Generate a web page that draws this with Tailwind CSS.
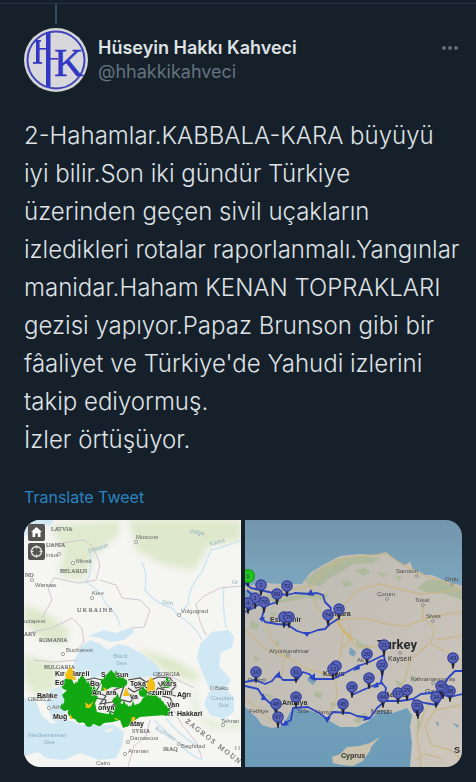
<!DOCTYPE html>
<html lang="tr">
<head>
    <meta charset="UTF-8">
    <meta name="viewport" content="width=device-width, initial-scale=1.0">
    <title>Hüseyin Hakkı Kahveci</title>
    <script src="https://cdn.jsdelivr.net/npm/@tailwindcss/browser@4"></script>
</head>
<body class="bg-[#16202b] min-h-screen pt-[3px] font-['Inter','Liberation_Sans',sans-serif]">

    <article class="border-t border-[#2c3843] pl-6 pr-[14px] pb-4">

        <!-- Thread line -->
        <div class="w-16 h-5 mb-1 flex justify-center">
            <div class="w-[2px] h-full bg-[#34495a]"></div>
        </div>

        <!-- Author -->
        <header class="flex items-start">
            <svg class="size-16 shrink-0" viewBox="0 0 64 64" role="img" aria-label="HK">
                <circle cx="32" cy="32" r="32" fill="#d5d5d8"/>
                <circle cx="32" cy="32" r="28.5" fill="#d8d8dc" stroke="#4044b8" stroke-width="2"/>
                <g fill="#3338c4">
                    <rect x="22" y="4" width="4.5" height="55"/>
                    <rect x="12" y="12" width="3.6" height="23"/>
                    <rect x="9" y="34" width="9" height="1.8"/>
                    <rect x="11" y="12" width="6" height="1.6"/>
                    <rect x="15" y="20" width="8" height="1.6"/>
                    <rect x="26" y="30" width="8" height="1.6"/>
                    <text x="30" y="48" font-family="Liberation Serif, serif" font-size="41" stroke="#3338c4" stroke-width="0.5">K</text>
                </g>
            </svg>
            <div class="ml-[10px] mt-2 flex-1 min-w-0">
                <h1 class="text-[18px] leading-6 font-semibold text-[#dfe2e4]">Hüseyin Hakkı Kahveci</h1>
                <p class="text-[18px] leading-6 text-[#64727e]">@hhakkikahveci</p>
            </div>
            <button type="button" aria-label="More" class="mt-3 w-6 h-4 flex items-center justify-center">
                <svg class="w-[18px] h-1" viewBox="0 0 18 4" fill="#64727e">
                    <circle cx="3" cy="2" r="1.9"/>
                    <circle cx="9" cy="2" r="1.9"/>
                    <circle cx="15" cy="2" r="1.9"/>
                </svg>
            </button>
        </header>

        <!-- Tweet text -->
        <p class="mt-[25px] text-[24px] leading-[38px] font-light text-[#dfe2e5] whitespace-nowrap">
            2-Hahamlar.KABBALA-KARA büyüyü<br>
            iyi bilir.Son iki gündür Türkiye<br>
            üzerinden geçen sivil uçakların<br>
            izledikleri rotalar raporlanmalı.Yangınlar<br>
            manidar.Haham KENAN TOPRAKLARI<br>
            gezisi yapıyor.Papaz Brunson gibi bir<br>
            fâaliyet ve Türkiye'de Yahudi izlerini<br>
            takip ediyormuş.<br>
            İzler örtüşüyor.
        </p>
        <a href="#" class="mt-[26px] block w-fit text-[16px] leading-6 text-[#2a83c0]">Translate Tweet</a>

        <!-- Attached maps -->
        <div class="mt-[11px] grid grid-cols-2 gap-1 rounded-2xl overflow-hidden">

            <svg class="w-full h-auto block" viewBox="0 0 217 247" role="img" aria-label="Map of fires">
                <defs>
                    <path id="flame" d="M0 5 C-5 4 -5 0 -3 -3 L-2 -1 L0 -7 L2 -2 L3 -3 C5 0 5 4 0 5Z"/>
                    <filter id="soft" x="-20%" y="-20%" width="140%" height="140%"><feGaussianBlur stdDeviation="3"/></filter>
                </defs>
                <rect width="217" height="247" fill="#f5f5f2"/>
                <!-- forests and hills -->
                <g fill="#dbe7c6" filter="url(#soft)">
                    <path d="M25 5 L95 0 L95 15 L70 35 L60 60 L35 55 L40 30Z" opacity=".8"/>
                    <path d="M105 0 L217 0 L217 20 L185 25 L170 50 L140 45 L112 30Z" opacity=".9"/>
                    <path d="M0 85 L20 92 L45 110 L40 125 L15 118 L0 100Z" opacity=".9"/>
                    <path d="M0 135 L35 145 L30 170 L10 175 L0 160Z" opacity=".8"/>
                    <path d="M112 128 L150 140 L175 155 L172 162 L140 150Z"/>
                    <path d="M170 165 L176 195 L200 205 L217 200 L217 210 L185 208 L168 190Z" opacity=".6"/>
                </g>
                <!-- seas -->
                <g fill="#cfe8f4">
                    <path d="M0 0 L30 0 L26 6 L14 4 L8 12 L0 16Z"/>
                    <path d="M52 152 L50 142 L56 128 L66 120 L76 124 L84 130 L94 124 L104 126 L118 134 L134 146 L138 156 L110 160 L90 152 L70 158Z"/>
                    <path d="M64 116 L80 110 L92 113 L108 107 L110 112 L100 120 L86 122 L76 118Z"/>
                    <path d="M173 138 L176 124 L188 112 L204 110 L210 116 L208 128 L197 132 L195 146 L207 160 L202 168 L210 178 L210 192 L200 199 L186 195 L180 184 L186 170 L178 152Z"/>
                    <path d="M0 178 L12 182 L18 196 L28 204 L44 200 L58 205 L90 205 L100 212 L98 226 L92 238 L76 240 L56 233 L40 240 L22 238 L14 232 L0 236Z"/>
                    <path d="M26 170 L38 166 L42 190 L38 204 L28 200 L22 182Z"/>
                </g>
                <path d="M80 210 L90 207 L88 211 L83 213Z" fill="#f1f0e8"/>
                <!-- rivers -->
                <g fill="none" stroke="#cbe4f0" stroke-width="1.3">
                    <path d="M65 30 Q70 50 62 62 Q76 70 82 84 Q95 95 96 106"/>
                    <path d="M117 42 Q124 50 121 70 Q132 84 148 88 L154 95"/>
                    <path d="M217 20 Q200 27 187 30 L178 52 Q165 65 164 84 L155 96 Q170 104 178 120"/>
                    <path d="M200 66 Q198 85 202 108"/>
                    <path d="M130 200 Q145 215 154 222 Q165 235 178 240"/>
                    <path d="M142 198 Q155 215 172 225"/>
                </g>
                <!-- borders -->
                <g fill="none" stroke="#d3c4d0" stroke-width="1">
                    <path d="M26 25 L45 22 L60 20 L70 28 L76 45 L72 60 L55 63 L30 58 L24 68 L28 80 L18 98"/>
                    <path d="M76 60 L92 65 L98 78 L116 80 L126 90 L120 107 L108 108"/>
                    <path d="M8 112 L28 108 L48 98 L58 108 L60 122 L52 132"/>
                    <path d="M217 66 L196 68 L180 76 L172 84 L176 102 L182 115"/>
                    <path d="M10 140 L30 142 L54 140"/>
                    <path d="M126 200 L122 216 L110 226 L104 247"/>
                    <path d="M150 190 L158 205 L172 222 L178 238"/>
                    <path d="M132 155 L150 158 L170 168"/>
                </g>
                <!-- place names -->
                <g font-family="Liberation Serif, serif" font-size="6" fill="#6f6f6f" stroke="#6f6f6f" stroke-width=".2">
                    <text x="27" y="11">LATVIA</text>
                    <text x="22" y="27">UANIA</text>
                    <text x="36" y="53">BELARUS</text>
                    <text x="1" y="57">ND</text>
                    <text x="53" y="92">U K R A I N E</text>
                    <text x="0" y="116">ARY</text>
                    <text x="15" y="122">ROMANIA</text>
                    <text x="20" y="149">BULGARIA</text>
                    <text x="4" y="181">GREECE</text>
                    <text x="129" y="156">GEORGIA</text>
                    <text x="108" y="213">SYRIA</text>
                    <text x="139" y="231">IRAQ</text>
                    <text x="161" y="202" transform="rotate(38 161 202)" font-size="7">Z A G R O S &#160; M O U N</text>
                </g>
                <g font-family="Liberation Sans, sans-serif" font-size="6" fill="#686868">
                    <text x="22" y="37">lnius</text>
                    <text x="52" y="43">Minsk</text>
                    <text x="11" y="67">Warsaw</text>
                    <text x="68" y="75">Kiev</text>
                    <text x="0" y="103">udapest</text>
                    <text x="42" y="132">Bucharest</text>
                    <text x="112" y="19">Moscow</text>
                    <text x="157" y="93">Volgograd</text>
                    <text x="28" y="189">Ath</text>
                    <text x="72" y="245">Cairo</text>
                    <text x="106" y="220">Damascus</text>
                    <text x="104" y="233">Amman</text>
                    <text x="157" y="228">Baghdad</text>
                    <text x="191" y="170">Baku</text>
                    <text x="197" y="203">Tehran</text>
                    <text x="211" y="230">I I</text>
                </g>
                <g font-family="Liberation Sans, sans-serif" font-size="6" fill="#8fb0bf">
                    <text x="89" y="138">Black</text>
                    <text x="92" y="145">Sea</text>
                    <text x="187" y="180">Caspian</text>
                    <text x="194" y="187">Sea</text>
                    <text x="4" y="217">Mediterranean</text>
                    <text x="20" y="224">Sea</text>
                    <text x="65" y="33" transform="rotate(-18 65 33)">Dnieper</text>
                    <text x="138" y="84" transform="rotate(8 138 84)">Don</text>
                    <text x="165" y="13" transform="rotate(8 165 13)">Volga</text>
                    <text x="186" y="26" transform="rotate(-15 186 26)">Kama</text>
                    <text x="208" y="64">Ur</text>
                    <text x="131" y="209" transform="rotate(32 131 209)" font-size="5">Euphrates</text>
                </g>
                <g fill="#fff" stroke="#888" stroke-width=".8">
                    <circle cx="35" cy="34" r="1.6"/><circle cx="49" cy="43" r="1.6"/>
                    <circle cx="8" cy="60" r="1.6"/><circle cx="68" cy="78" r="1.6"/>
                    <circle cx="112" cy="22" r="1.6"/><circle cx="155" cy="95" r="1.6"/>
                    <circle cx="39" cy="134" r="1.6"/><circle cx="25" cy="188" r="1.6"/>
                    <circle cx="188" cy="168" r="1.6"/><circle cx="199" cy="205" r="1.6"/>
                    <circle cx="155" cy="224" r="1.6"/><circle cx="101" cy="234" r="1.6"/>
                    <circle cx="104" cy="222" r="1.6"/>
                </g>
                <!-- province outlines -->
                <path d="M66 158 L78 162 L104 158 L134 156 L148 158 L154 168 L150 180 L154 190 L120 192 L92 196 L74 190Z" fill="#eeeeec"/>
                <g fill="none" stroke="#4a4a4a" stroke-width="1.2">
                    <path d="M66 160 L76 164 L72 172 L82 176 L76 184 L88 182 L94 176 L90 170 L100 166 L96 178 L84 190 L92 194"/>
                    <path d="M104 160 L116 158 L122 162 L134 157 L146 158 L152 166 L146 172 L134 168 L128 176 L118 168 L110 172 L104 168"/>
                    <path d="M138 176 L146 178 L150 186 L142 190 M118 190 L126 188 L128 194"/>
                    <path d="M62 160 L70 158 L78 160 M72 178 L82 180 L80 188 L90 186 L98 180 L106 182 L112 176 L104 174"/>
                    <path d="M108 162 L112 168 L120 166 L126 170 M134 162 L138 168 L148 166 M132 172 L142 174 L152 176"/>
                </g>
                <!-- fires -->
                <g fill="#12a812">
                    <path d="M46 155 L50 164 L54 162 L58 154 L63 163 L68 165 L67 170 L74 177 L71 183 L73 192 L89 195 L91 186 L96 183 L106 187 L116 183 L120 177 L129 172 L138 181 L145 190 L143 195 L128 196 L116 197 L108 202 L104 206 L99 208 L96 200 L89 202 L80 203 L76 206 L66 203 L60 203 L48 198 L45 190 L39 188 L41 181 L38 175 L43 170 L40 160Z"/>
                    <path d="M78 165 L82 155 L87 150 L91 154 L95 152 L98 158 L103 162 L98 168 L88 167 L82 170 L77 171Z"/>
                    <use href="#flame" x="58" y="161"/><use href="#flame" x="42" y="165"/>
                    <use href="#flame" x="41" y="186"/><use href="#flame" x="70" y="172"/>
                    <use href="#flame" x="93" y="180"/><use href="#flame" x="119" y="172"/>
                    <use href="#flame" x="143" y="163"/><use href="#flame" x="86" y="197"/>
                    <use href="#flame" x="102" y="202"/><use href="#flame" x="129" y="178"/>
                    <use href="#flame" x="75" y="201"/><use href="#flame" x="56" y="198"/>
                    <use href="#flame" x="48" y="192"/><use href="#flame" x="65" y="202"/>
                    <use href="#flame" x="81" y="161"/><use href="#flame" x="92" y="157"/>
                    <use href="#flame" x="99" y="162"/><use href="#flame" x="136" y="184"/>
                    <use href="#flame" x="122" y="181"/><use href="#flame" x="109" y="188"/>
                    <use href="#flame" x="100" y="187"/><use href="#flame" x="142" y="191"/>
                    <use href="#flame" x="52" y="168"/><use href="#flame" x="64" y="167"/>
                </g>
                <g fill="#f2bf12">
                    <path d="M46 147 L50 151 L52 160 L42 159 L41 154Z"/>
                    <path d="M127 157 L131 163 L131 172 L123 172 L123 163Z"/>
                    <path d="M99 176 L102 167 L104 172 L106 176Z"/>
                    <path d="M61 182 L65 185 L70 181 L66 188 L62 188Z"/>
                    <path d="M79 167 L84 170 L80 171Z"/>
                    <path d="M46 194 L49 199 L46 199Z"/>
                    <path d="M108 197 L111 197 L111 202 L107 201Z"/>
                    <path d="M90 198 L95 199 L92 200Z"/>
                </g>
                <g font-family="Liberation Sans, sans-serif" font-weight="700" font-size="7" fill="#1c1c1c" stroke="#f4f4f0" stroke-width="1" paint-order="stroke">
                    <text x="31" y="156">Kır</text><text x="49" y="156">lareli</text>
                    <text x="31" y="165">Ed</text><text x="13" y="178">Balıke</text>
                    <text x="29" y="199">Muğ</text>
                    <text x="77" y="157">S</text><text x="92" y="157">sun</text>
                    <text x="66" y="166">Bo</text><text x="68" y="175">An</text><text x="82" y="175">ara</text>
                    <text x="74" y="190">onya</text>
                    <text x="106" y="166">Toka</text><text x="137" y="166">Kars</text>
                    <text x="106" y="179">va</text>
                    <text x="125" y="175">rzurum</text><text x="153" y="177">Ağrı</text>
                    <text x="143" y="187">Van</text>
                    <text x="144" y="196">rt</text><text x="153" y="196">Hakkari</text>
                    <text x="106" y="206">atay</text>
                </g>
                <!-- map controls -->
                <rect x="4" y="4" width="17" height="17" rx="2" fill="#555553"/>
                <path d="M12.5 7 L18 12 L16.5 12 L16.5 17 L13.8 17 L13.8 13.5 L11.2 13.5 L11.2 17 L8.5 17 L8.5 12 L7 12Z" fill="#fff"/>
                <rect x="4" y="23" width="17" height="17" rx="2" fill="#555553"/>
                <circle cx="12.5" cy="31.5" r="5" fill="none" stroke="#e8e8e8" stroke-width="1.3"/>
                <path d="M12.5 25.5v3 M12.5 34.5v3 M6.5 31.5h3 M15.5 31.5h3" stroke="#e8e8e8" stroke-width="1.2"/>
            </svg>

            <svg class="w-full h-auto block" viewBox="0 0 217 247" role="img" aria-label="Map of the route">
                <defs>
                    <linearGradient id="sea" x1="0" y1="0" x2="0" y2="1">
                        <stop offset="0" stop-color="#7396ab"/>
                        <stop offset=".25" stop-color="#7ca5bd"/>
                        <stop offset="1" stop-color="#6d9cb8"/>
                    </linearGradient>
                    <linearGradient id="land" x1="0" y1="0" x2="1" y2="1">
                        <stop offset="0" stop-color="#bdbbb4"/>
                        <stop offset="1" stop-color="#cdc6bc"/>
                    </linearGradient>
                </defs>
                <rect width="217" height="247" fill="url(#sea)"/>
                <path fill="url(#land)" d="M0 66 L20 63 L38 64 L57 64 L65 53 L78 45 L95 36 L115 34 L130 35 L141 32 L150 40 L160 45 L165 42 L168 49 L175 52 L180 55 L187 55 L200 61 L217 66 L217 247 L165 247 L167 223 L165 207 L167 195 L162 188 L148 193 L135 190 L125 200 L112 207 L95 207 L83 200 L67 191 L50 188 L45 192 L38 206 L27 208 L17 205 L12 198 L0 187Z"/>
                <path fill="#c9c2ae" d="M87 237 L95 234 L102 227 L114 226 L125 223 L135 217 L126 227 L125 231 L118 241 L108 246 L96 245 L88 243Z"/>
                <path fill="#7ba2b5" d="M0 70 L8 72 L6 78 L0 80Z M105 127 L111 132 L109 137 L104 134Z M65 155 L72 160 L68 165 L62 160Z M118 130 L122 134 L120 136Z M190 201 L194 203 L193 207Z M207 203 L214 205 L213 208Z"/>
                <!-- woods -->
                <g fill="#a8b795" opacity=".75">
                    <path d="M60 60 L72 50 L92 39 L115 36 L136 38 L128 43 L108 44 L96 52 L84 58 L76 66 L64 66Z"/>
                    <path d="M20 74 L40 78 L60 72 L84 74 L80 80 L62 78 L30 84Z"/>
                    <path d="M182 60 L196 60 L217 70 L217 80 L200 74 L180 72 L172 68Z"/>
                    <path d="M110 50 l10 -2 l6 4 l-8 4z M132 52 l10 2 l-4 4z M96 62 l8 -2 l4 5 l-8 2z M150 55 l8 3 l-5 3z"/>
                    <path d="M6 100 l8 4 l-2 6 l-7 -2z M24 92 l8 1 l-3 4z M30 120 l6 2 l-4 5z M110 118 l8 6 l8 2 l-6 4 l-8 -4z M8 135 l7 3 l-4 4z"/>
                    <path d="M20 172 l8 4 l-3 6z M70 170 l8 4 l-2 5 l-7 -3z M84 182 l8 2 l-4 4z M108 200 l12 -8 l3 4 l-10 8z M150 160 l8 3 l-5 4z M165 155 l9 3 l-6 5z M172 195 l4 10 l-4 8z M95 236 l8 -2 l-2 5z"/>
                </g>
                <!-- roads -->
                <g fill="none" stroke="#c9b687" stroke-width="1.4" opacity=".85">
                    <path d="M0 69 L30 72 L66 66 L80 48 L100 38 L141 34 L160 46 L180 56 L217 68"/>
                    <path d="M66 66 L72 90 L90 100 L98 110 L112 128 L138 126"/>
                    <path d="M90 96 L112 70 L135 64 L158 70 L176 74 L217 70"/>
                    <path d="M92 100 L118 98 L142 104 L160 106 L190 96 L217 92"/>
                    <path d="M178 84 L178 98 L190 108 L186 122 L165 140 L160 160 L150 175"/>
                    <path d="M0 110 L22 130 L44 138 L60 148 L88 156"/>
                    <path d="M20 102 L28 122 L40 136 L36 160"/>
                    <path d="M98 112 L96 134 L90 150 L92 176 L84 196"/>
                    <path d="M104 105 L106 118 L98 128"/>
                    <path d="M190 120 L217 116 M186 124 L217 140 M210 150 L196 166 L180 190 L172 215 L176 247"/>
                    <path d="M217 185 L190 190 L180 205 L186 225 L205 230 L217 240"/>
                    <path d="M170 240 L180 234 L196 238"/>
                    <path d="M0 178 L14 190 L28 202"/>
                </g>
                <path d="M92 96 L96 108 L108 120" fill="none" stroke="#d3b26a" stroke-width="2"/>
                <!-- place names -->
                <g font-family="Liberation Sans, sans-serif" font-size="6" fill="#4c4c4c">
                    <text x="151" y="53">Samsun</text><text x="200" y="61">Ordu</text>
                    <text x="132" y="76">Çorum</text><text x="170" y="82">Tokat</text>
                    <text x="181" y="98">Sivas</text>
                    <text x="143" y="141" font-size="7" fill="#333">Kayseri</text>
                    <text x="24" y="133">Afyonkarahisar</text>
                    <text x="112" y="142">Ak</text>
                    <text x="166" y="161">Kahramanmaraş</text>
                    <text x="4" y="193">Fethiye</text><text x="52" y="193">Side</text><text x="70" y="194">Alanya</text>
                    <text x="3" y="162">Denizli</text>
                </g>
                <g fill="#ddd" stroke="#666" stroke-width=".7">
                    <circle cx="172" cy="56" r="1.4"/><circle cx="207" cy="64" r="1.4"/><circle cx="142" cy="79" r="1.4"/>
                    <circle cx="178" cy="85" r="1.4"/><circle cx="188" cy="101" r="1.4"/><circle cx="155" cy="133" r="1.4"/>
                    <circle cx="43" cy="135" r="1.4"/><circle cx="188" cy="163" r="1.4"/>
                </g>
                <g font-family="Liberation Sans, sans-serif" font-weight="700" font-size="7" fill="#333">
                    <text x="25" y="102">Eskişehir</text><text x="82" y="96">Ankara</text>
                    <text x="78" y="156">Konya</text><text x="37" y="185">Antalya</text>
                    <text x="126" y="194" font-weight="400">Mersin</text>
                    <text x="140" y="177">Adana</text><text x="180" y="174" font-weight="400">Gaz</text>
                    <text x="96" y="238">Cyprus</text>
                    <text x="209" y="233" font-size="9">S</text>
                    <text x="132" y="129" font-size="13" font-family="Roboto, sans-serif" fill="#2c2c30">Turkey</text>
                </g>
                <!-- route -->
                <g fill="none" stroke="#2b45c4" stroke-width="1.8" stroke-linejoin="round">
                    <path d="M0 63 L6 68 L15 70 L28 73 L42 75 L50 73 L65 74 L72 73 L78 75 L80 82 L86 88 L83 103"/>
                    <path d="M93 99 L85 104 L80 109 L73 110 L62 114 L52 111 L43 105 L32 104 L20 102 L17 97 L20 86 L32 82 L34 76"/>
                    <path d="M0 162 L10 160 L20 164 L27 161 L33 154 L38 160 L52 160 L58 152 L64 154 L70 159 L88 159 L100 153 L113 146 L122 143 L139 135 L140 142 L136 162 L141 168 L139 182 L132 188 L125 198 L112 196 L105 193 L88 192 L82 199 L74 193 L63 187 L48 188 L46 200 L37 205 L34 196 L26 184 L18 177 L13 169 L0 166"/>
                    <path d="M107 175 L118 170 L132 164 L138 163"/>
                    <path d="M139 181 L155 181 L168 179 L176 174 L195 172 L203 158 L210 151 L217 151"/>
                    <path d="M168 180 L180 183 L192 185 L198 175 L205 177 L217 174 M172 184 L172 196"/>
                    <path d="M0 92 L8 88 L18 82 L10 78 L2 70"/>
                </g>
                <g fill="#2b45c4">
                    <path d="M62 75 L66 69 L69 76Z M58 112 L65 112 L62 117Z M29 157 L35 151 L35 158Z M64 158 L70 153 L70 161Z M16 180 L18 173 L22 180Z M79 197 L86 197 L82 203Z M108 151 L114 144 L115 149Z M118 201 L120 196 L126 199Z M128 168 L132 162 L134 167Z M38 206 L40 200 L44 205Z M14 98 L20 97 L17 102Z"/>
                </g>
                <g id="pins"></g>
            </svg>
        </div>
    </article>

    <script>
        // Pin centres on the route map: x, y, number
        const pins = [
            [16, 65, '2'], [42, 66, '72'], [32, 74, '69'], [19, 82, '70'], [10, 78, '3'], [3, 83, '4'],
            [39, 97, ''], [44, 97, '76'], [94, 89, '73'], [83, 95, '74'],
            [11, 152, '10'], [51, 152, '11'], [91, 146, ''], [88, 149, '12'], [107, 167, '28'],
            [98, 184, '45'], [51, 177, '46'], [31, 184, '48'], [33, 197, '47'],
            [122, 134, '20'], [139, 125, '21'], [137, 145, '22'], [124, 158, '24'], [138, 177, '44'],
            [153, 173, '17'], [162, 170, '29'], [208, 138, '43'], [205, 171, '38'], [198, 168, ''],
            [196, 166, '40'], [191, 177, '34'], [173, 188, ''], [172, 185, '32'], [3, 56, '1'],
        ];

        document.getElementById('pins').innerHTML = pins.map(([x, y, n]) => {
            const start = n === '1';
            const r = start ? 6.5 : 5.2;
            return `<path d="M${x - 2} ${y + 4}h4l-1.5 7h-1z" fill="#23242e"/>
                <circle cx="${x}" cy="${y}" r="${r}" fill="${start ? '#1fc41f' : '#5965b4'}" stroke="${start ? '#189a18' : '#303d9c'}" stroke-width="1.2"/>
                <text x="${x}" y="${y + 2}" text-anchor="middle" font-family="Liberation Sans, sans-serif" font-size="6" fill="#1d2560">${n}</text>`;
        }).join('');
    </script>
</body>
</html>
